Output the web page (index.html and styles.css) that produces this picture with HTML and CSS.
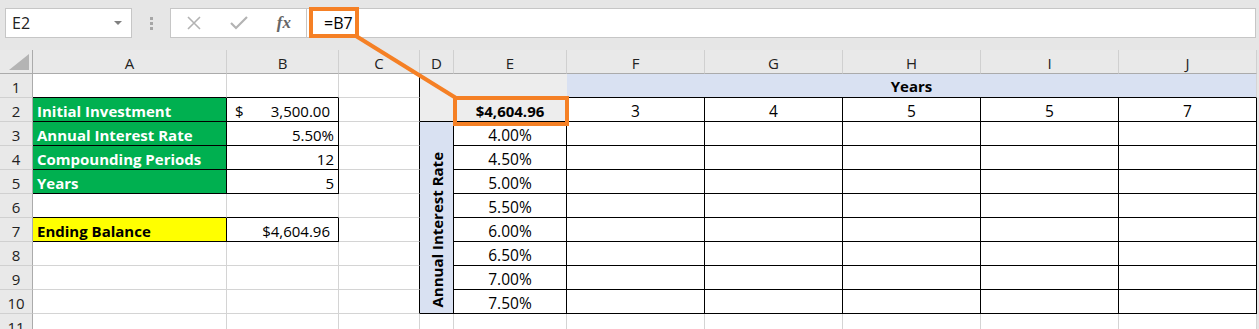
FILE: index.html
```html
<!DOCTYPE html>
<html lang="en">
<head>
    <meta charset="UTF-8">
    <title>Compound interest data table</title>
    <link rel="stylesheet" href="styles.css">
</head>
<body>
    <div class="topbar">
        <div class="namebox">
            <span>E2</span>
            <svg class="drop" width="8" height="5" viewBox="0 0 8 5"><path d="M0 0h8L4 4z" fill="#808080"/></svg>
        </div>
        <div class="grip"><i></i><i></i><i></i></div>
        <div class="fxbtns">
            <svg width="16" height="16" viewBox="0 0 16 16"><path d="M2 2l12 12M14 2L2 14" stroke="#b3b3b3" stroke-width="1.6" fill="none"/></svg>
            <svg width="20" height="16" viewBox="0 0 20 16"><path d="M2 8l5 5L18 2" stroke="#b3b3b3" stroke-width="2.2" fill="none"/></svg>
            <span class="fx">fx</span>
        </div>
        <div class="formula">=B7</div>
    </div>

    <div class="sheet">
        <div class="corner"><svg width="20" height="16" viewBox="0 0 20 16"><path d="M20 0v16H0z" fill="#b4b4b4"/></svg></div>
        <div class="hd">A</div><div class="hd">B</div><div class="hd">C</div><div class="hd">D</div><div class="hd">E</div>
        <div class="hd">F</div><div class="hd">G</div><div class="hd">H</div><div class="hd">I</div><div class="hd">J</div>

        <!-- row 1 -->
        <div class="rh">1</div>
        <div class="c bt"></div><div class="c bt"></div><div class="c br"></div>
        <div class="c grey"></div><div class="c grey"></div>
        <div class="c blue head">Years</div>

        <!-- row 2 -->
        <div class="rh">2</div>
        <div class="c lbl">Initial Investment</div>
        <div class="c val acct"><span>$</span><span>3,500.00</span></div>
        <div class="c br"></div>
        <div class="c grey gb"></div>
        <div class="c grey gb sel">$4,604.96</div>
        <div class="c bx mid">3</div><div class="c bx mid">4</div><div class="c bx mid">5</div><div class="c bx mid">5</div><div class="c bx mid">7</div>

        <!-- row 3 -->
        <div class="rh">3</div>
        <div class="c lbl">Annual Interest Rate</div>
        <div class="c val">5.50%</div>
        <div class="c br"></div>
        <div class="c blue side"><span>Annual Interest Rate</span></div>
        <div class="c bx mid">4.00%</div>
        <div class="c bx"></div><div class="c bx"></div><div class="c bx"></div><div class="c bx"></div><div class="c bx"></div>

        <!-- row 4 -->
        <div class="rh">4</div>
        <div class="c lbl">Compounding Periods</div>
        <div class="c val">12</div>
        <div class="c br"></div>
        <div class="c bx mid">4.50%</div>
        <div class="c bx"></div><div class="c bx"></div><div class="c bx"></div><div class="c bx"></div><div class="c bx"></div>

        <!-- row 5 -->
        <div class="rh">5</div>
        <div class="c lbl">Years</div>
        <div class="c val">5</div>
        <div class="c br"></div>
        <div class="c bx mid">5.00%</div>
        <div class="c bx"></div><div class="c bx"></div><div class="c bx"></div><div class="c bx"></div><div class="c bx"></div>

        <!-- row 6 -->
        <div class="rh">6</div>
        <div class="c bt"></div><div class="c bt"></div><div class="c br"></div>
        <div class="c bx mid">5.50%</div>
        <div class="c bx"></div><div class="c bx"></div><div class="c bx"></div><div class="c bx"></div><div class="c bx"></div>

        <!-- row 7 -->
        <div class="rh">7</div>
        <div class="c end">Ending Balance</div>
        <div class="c val money">$4,604.96</div>
        <div class="c br"></div>
        <div class="c bx mid">6.00%</div>
        <div class="c bx"></div><div class="c bx"></div><div class="c bx"></div><div class="c bx"></div><div class="c bx"></div>

        <!-- row 8 -->
        <div class="rh">8</div>
        <div class="c"></div><div class="c"></div><div class="c br"></div>
        <div class="c bx mid">6.50%</div>
        <div class="c bx"></div><div class="c bx"></div><div class="c bx"></div><div class="c bx"></div><div class="c bx"></div>

        <!-- row 9 -->
        <div class="rh">9</div>
        <div class="c"></div><div class="c"></div><div class="c br"></div>
        <div class="c bx mid">7.00%</div>
        <div class="c bx"></div><div class="c bx"></div><div class="c bx"></div><div class="c bx"></div><div class="c bx"></div>

        <!-- row 10 -->
        <div class="rh">10</div>
        <div class="c"></div><div class="c"></div><div class="c br"></div>
        <div class="c bx mid">7.50%</div>
        <div class="c bx"></div><div class="c bx"></div><div class="c bx"></div><div class="c bx"></div><div class="c bx"></div>

        <!-- row 11 -->
        <div class="rh">11</div>
        <div class="c"></div><div class="c"></div><div class="c"></div><div class="c"></div><div class="c"></div>
        <div class="c"></div><div class="c"></div><div class="c"></div><div class="c"></div><div class="c"></div>
    </div>

    <svg class="callout" width="1259" height="329" viewBox="0 0 1259 329">
        <rect x="311" y="9" width="46" height="27" fill="none" stroke="#f58025" stroke-width="4"/>
        <line x1="356" y1="36" x2="456" y2="98" stroke="#f58025" stroke-width="4"/>
        <rect x="455" y="98" width="112" height="26" fill="none" stroke="#f58025" stroke-width="4"/>
    </svg>
</body>
</html>
```

FILE: styles.css
```css
* {
    box-sizing: border-box;
}

html, body {
    margin: 0;
    padding: 0;
    width: 1259px;
    height: 329px;
    overflow: hidden;
    background: #e6e6e6;
    font-family: "Open Sans", "Liberation Sans", sans-serif;
    color: #000;
}

body {
    position: relative;
}

.topbar {
    height: 50px;
    display: flex;
    align-items: flex-start;
    padding: 8px 3px 0 5px;
}

.namebox {
    width: 127px;
    height: 30px;
    background: #fff;
    border: 1px solid #c6c6c6;
    display: flex;
    align-items: center;
    justify-content: space-between;
    padding: 0 9px 0 6px;
    font-size: 16px;
    color: #222;
}

.grip {
    width: 38px;
    height: 30px;
    display: flex;
    flex-direction: column;
    align-items: center;
    justify-content: center;
    gap: 2px;
}

.grip i {
    width: 3px;
    height: 3px;
    background: #a6a6a6;
}

.fxbtns {
    width: 137px;
    height: 30px;
    background: #fff;
    border: 1px solid #c6c6c6;
    display: flex;
    align-items: center;
    justify-content: space-between;
    padding: 0 15px 0 15px;
}

.fx {
    font-family: "Liberation Serif", serif;
    font-style: italic;
    font-weight: bold;
    font-size: 17px;
    color: #666;
}

.formula {
    flex: 1;
    height: 30px;
    margin-left: -1px;
    background: #fff;
    border: 1px solid #c6c6c6;
    display: flex;
    align-items: center;
    padding-left: 17px;
    font-size: 16px;
}

.sheet {
    display: grid;
    grid-template-columns: 33px 194px 112px 81px 34px 113px 138px 138px 138px 138px 138px;
    grid-auto-rows: 24px;
    background: #fff;
    width: 1257px;
    font-size: 15px;
}

.corner, .hd, .rh {
    background: #e9e9e9;
    border-right: 1px solid #ababab;
    border-bottom: 1px solid #ababab;
    display: flex;
    align-items: center;
    justify-content: center;
    padding-top: 2px;
    font-size: 15px;
    color: #222;
}

.corner {
    align-items: flex-end;
    justify-content: flex-end;
    padding: 0 3px 3px 0;
}

.hd {
    border-right-color: #d0d0d0;
}

.rh {
    border-bottom-color: #d0d0d0;
}

.c {
    border-right: 1px solid #d4d4d4;
    border-bottom: 1px solid #d4d4d4;
    display: flex;
    align-items: center;
    padding: 2px 4px 0;
    white-space: nowrap;
    overflow: hidden;
}

.bt {
    border-bottom-color: #000;
}

.br {
    border-right-color: #000;
}

.bx {
    border-right-color: #000;
    border-bottom-color: #000;
}

.mid {
    justify-content: center;
    font-size: 15.5px;
}

.lbl {
    background: #00b050;
    color: #fff;
    font-weight: bold;
    border-right-color: #000;
    border-bottom-color: #000;
}

.end {
    background: #ffff00;
    font-weight: bold;
    border-right-color: #000;
    border-bottom-color: #000;
}

.val {
    justify-content: flex-end;
    border-right-color: #000;
    border-bottom-color: #000;
}

.acct {
    justify-content: space-between;
    padding: 2px 8px 0 8px;
}

.money {
    padding-right: 8px;
}

.grey {
    background: #ededed;
    border-color: transparent;
}

.gb {
    border-bottom-color: #000;
}

.sel {
    justify-content: center;
    font-weight: bold;
    border-right-color: #000;
}

.blue {
    background: #d9e1f2;
}

.head {
    grid-column: span 5;
    justify-content: center;
    font-weight: bold;
    padding-top: 0;
    border-bottom-color: #000;
}

.side {
    grid-row: span 8;
    align-items: flex-end;
    justify-content: center;
    padding: 0 0 5px;
    border-right-color: #000;
    border-bottom-color: #000;
    font-weight: bold;
}

.side span {
    writing-mode: vertical-rl;
    transform: rotate(180deg);
}

.callout {
    position: absolute;
    left: 0;
    top: 0;
    pointer-events: none;
}
```
